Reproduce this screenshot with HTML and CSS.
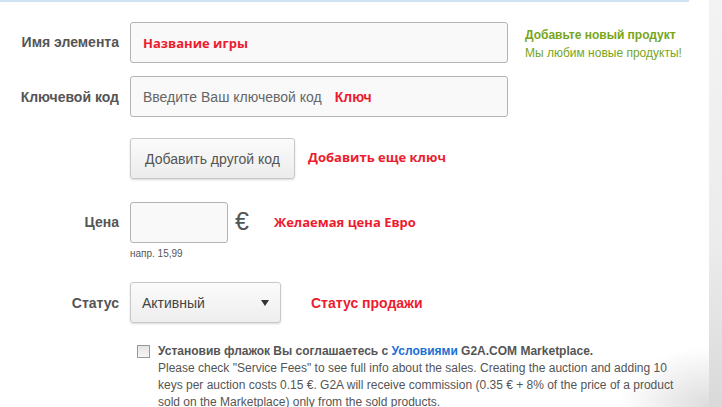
FILE: index.html
```html
<!DOCTYPE html>
<html lang="ru">
<head>
  <meta charset="UTF-8">
  <title>Добавить продукт</title>
  <link rel="stylesheet" href="styles.css">
</head>
<body>
  <div class="panel">
    <div class="topbar"></div>

    <div class="row row-name">
      <label class="label" for="name">Имя элемента</label>
      <div class="field field-wide">
        <span class="note">Название игры</span>
      </div>
      <div class="promo">
        <div class="promo-title">Добавьте новый продукт</div>
        <div class="promo-sub">Мы любим новые продукты!</div>
      </div>
    </div>

    <div class="row row-key">
      <label class="label" for="key">Ключевой код</label>
      <div class="field field-wide">
        <span class="placeholder">Введите Ваш ключевой код</span>
        <span class="note note-arial">Ключ</span>
      </div>
    </div>

    <div class="row row-button">
      <div class="label"></div>
      <button type="button" class="btn">Добавить другой код</button>
      <span class="note note-side">Добавить еще ключ</span>
    </div>

    <div class="row row-price">
      <label class="label" for="price">Цена</label>
      <div class="price-wrap">
        <div class="field field-price"></div>
        <div class="hint">напр. 15,99</div>
      </div>
      <span class="euro">€</span>
      <span class="note note-price">Желаемая цена Евро</span>
    </div>

    <div class="row row-status">
      <label class="label" for="status">Статус</label>
      <div class="select">
        <span>Активный</span>
        <span class="arrow"></span>
      </div>
      <span class="note note-arial note-status">Статус продажи</span>
    </div>

    <div class="terms">
      <span class="checkbox"></span>
      <div class="terms-text">
        <div class="terms-title">Установив флажок Вы соглашаетесь с <a href="#">Условиями</a> G2A.COM Marketplace.</div>
        <div>Please check "Service Fees" to see full info about the sales. Creating the auction and adding 10 keys per auction costs 0.15 €. G2A will receive commission (0.35 € + 8% of the price of a product sold on the Marketplace) only from the sold products.</div>
      </div>
    </div>
  </div>
</body>
</html>
```
FILE: styles.css
```css
html, body {
  margin: 0;
  height: 100%;
}

body {
  font-family: "Liberation Sans", Arial, sans-serif;
  background: linear-gradient(to bottom, #f3f3f3, #ececec 60%, #d9d9d9);
  overflow: hidden;
}

.panel {
  width: 709px;
  height: 407px;
  background: radial-gradient(ellipse 90px 60px at 100% 100%, #dcdcdc, rgba(255,255,255,0)) , #fff;
  position: relative;
}

.topbar {
  width: 689px;
  height: 2px;
  background: #cfe3f4;
}

.row {
  display: flex;
  align-items: center;
}

.label {
  width: 119px;
  flex: none;
  text-align: right;
  padding-right: 11px;
  font-weight: bold;
  font-size: 14px;
  color: #555;
}

.row-name {
  margin-top: 20px;
  align-items: flex-start;
}

.row-name .label {
  line-height: 41px;
}

.row-key {
  margin-top: 13px;
}

.row-button {
  margin-top: 21px;
}

.row-price {
  margin-top: 23px;
  align-items: flex-start;
}

.row-price .label {
  line-height: 41px;
}

.row-status {
  margin-top: 23px;
}

.field {
  height: 39px;
  border: 1px solid #b3b3b3;
  border-radius: 3px;
  background: #f9f9f9;
  display: flex;
  align-items: center;
  box-sizing: content-box;
}

.field-wide {
  width: 378px;
  padding-left: 12px;
  box-sizing: border-box;
  height: 41px;
}

.field-price {
  width: 96px;
}

.note {
  color: #ec1c2e;
  font-family: "Open Sans", sans-serif;
  font-weight: bold;
  font-size: 13px;
}

.note-arial {
  font-family: "Liberation Sans", Arial, sans-serif;
  font-size: 14px;
}

.placeholder {
  color: #666;
  font-size: 14px;
  margin-right: 13px;
}

.promo {
  margin-left: 17px;
  margin-top: 4px;
  font-size: 12px;
  color: #77a51a;
  line-height: 18px;
}

.promo-title {
  font-weight: bold;
}

.btn {
  width: 165px;
  height: 41px;
  margin: 0;
  font-family: "Liberation Sans", Arial, sans-serif;
  font-size: 14px;
  color: #555;
  border: 1px solid #c8c8c8;
  border-radius: 3px;
  background: linear-gradient(to bottom, #fbfbfb, #ececec);
  box-shadow: 0 1px 2px rgba(0, 0, 0, 0.15);
}

.note-side {
  margin-left: 13px;
  margin-top: -4px;
}

.price-wrap {
  display: flex;
  flex-direction: column;
}

.hint {
  font-size: 10px;
  color: #555;
  margin-top: 5px;
}

.euro {
  font-size: 25px;
  color: #555;
  margin-left: 7px;
  line-height: 41px;
  margin-top: -1px;
}

.note-price {
  margin-left: 25px;
  line-height: 41px;
}

.select {
  width: 151px;
  height: 41px;
  box-sizing: border-box;
  border: 1px solid #c8c8c8;
  border-radius: 3px;
  background: linear-gradient(to bottom, #fbfbfb, #eeeeee);
  box-shadow: 0 1px 2px rgba(0, 0, 0, 0.15);
  display: flex;
  align-items: center;
  justify-content: space-between;
  padding: 0 11px 0 11px;
  font-size: 14px;
  color: #444;
}

.arrow {
  width: 0;
  height: 0;
  border-left: 4px solid transparent;
  border-right: 4px solid transparent;
  border-top: 6px solid #333;
}

.note-status {
  margin-left: 30px;
}

.terms {
  display: flex;
  align-items: flex-start;
  margin-top: 20px;
  padding-left: 137px;
  font-size: 12px;
  line-height: 17px;
  color: #555;
}

.terms-text {
  width: 527px;
}

.checkbox {
  flex: none;
  width: 11px;
  height: 11px;
  border: 1px solid #999;
  background: linear-gradient(to bottom, #e4e4e4, #f6f6f6);
  margin-top: 2px;
  margin-right: 8px;
}

.terms-title {
  font-weight: bold;
  color: #555;
}

.terms-title a {
  color: #1a6fd6;
  text-decoration: none;
}
```
